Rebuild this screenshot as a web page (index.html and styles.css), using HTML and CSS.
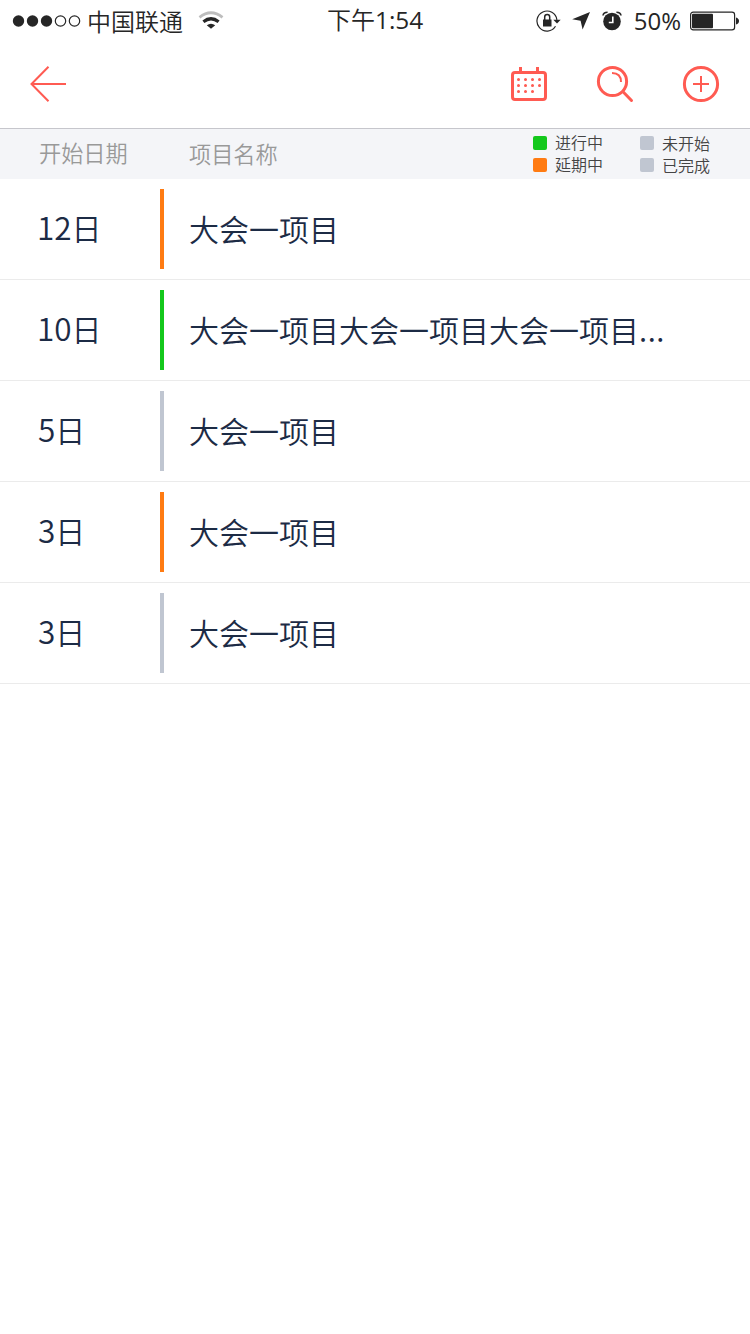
FILE: index.html
```html
<!DOCTYPE html>
<html lang="zh-CN">
<head>
<meta charset="utf-8">
<title>项目列表</title>
<link rel="stylesheet" href="styles.css">
</head>
<body>
<div class="status-bar">
  <div class="status-left">
    <svg class="signal" width="70" height="14" viewBox="0 0 70 14">
      <circle cx="6.500" cy="7" r="5.700"/><circle cx="20.500" cy="7" r="5.700"/><circle cx="34.500" cy="7" r="5.700"/>
      <circle class="empty" cx="48.500" cy="7" r="5.200"/><circle class="empty" cx="62.500" cy="7" r="5.200"/>
    </svg>
    <span class="carrier">中国联通</span>
    <svg class="wifi" width="26" height="20" viewBox="0 0 26 20">
      <path class="arc faint" d="M1.500 6.300Q13-2.800 24.500 6.300"/>
      <path class="arc" d="M5.400 10.700Q13 4.800 20.600 10.700"/>
      <path d="M8.800 14.200Q13 11.200 17.200 14.200L13 17.800Z"/>
    </svg>
  </div>
  <div class="clock">下午<span class="latin">1:54</span></div>
  <div class="status-right">
    <svg class="lock" width="26" height="24" viewBox="0 0 26 24">
      <path class="thin" d="M20.900 10.800A10 10 0 1 0 19.500 17.300"/>
      <path d="M17.300 10.700h7.400L21 14.500Z"/>
      <rect x="7" y="10.500" width="8.500" height="7"/>
      <path class="shackle" d="M8.700 11V8a2.500 2.500 0 0 1 5 0v3"/>
    </svg>
    <svg class="location" width="18" height="18" viewBox="0 0 18 18"><path d="M18 0L.2 7.200L8.600 8.800L10.600 17.500Z"/></svg>
    <svg class="alarm" width="20" height="20" viewBox="0 0 20 20">
      <circle cx="10" cy="10.500" r="8.800"/>
      <path class="bell" d="M1 4.500Q1.400 1.200 5.600 1.200M14.400 1.200Q18.600 1.200 19 4.500"/>
      <path class="hands" d="M10.800 5.500v6H6.800"/>
    </svg>
    <span class="percent latin">50%</span>
    <svg class="battery" width="50" height="20" viewBox="0 0 50 20">
      <rect class="shell" x=".6" y="1.100" width="44" height="17.800" rx="2.600"/>
      <rect x="2" y="2.800" width="21" height="14.500" rx="1"/>
      <path d="M46 6.500Q49 7.500 49 10T46 13.500Z"/>
    </svg>
  </div>
</div>

<div class="nav-bar">
  <svg class="back" width="38" height="38" viewBox="0 0 38 38"><path d="M37 19H3M19.500 1.800L2.500 19L19.500 36.200"/></svg>
  <div class="actions">
    <svg width="38" height="38" viewBox="0 0 38 38">
      <rect class="line" x="2.500" y="7.500" width="33" height="27" rx="2.500"/>
      <path class="line" d="M10.500 2v5M27.500 2v5"/>
      <path class="dots" d="M8.500 14.500h.01M15.500 14.500h.01M22.500 14.500h.01M29.500 14.500h.01M8.500 20.500h.01M15.500 20.500h.01M22.500 20.500h.01M29.500 20.500h.01M8.500 26.500h.01M15.500 26.500h.01M22.500 26.500h.01"/>
    </svg>
    <svg width="38" height="38" viewBox="0 0 38 38">
      <circle class="line" cx="16.500" cy="16.500" r="14.100"/>
      <path class="shine" d="M16 8Q25 8 25 17"/>
      <path class="line round" d="M27 26.800L35.500 35.500"/>
    </svg>
    <svg width="38" height="38" viewBox="0 0 38 38">
      <circle class="line" cx="19" cy="19" r="16.600"/>
      <path class="plus" d="M19 11v16M11 19h16"/>
    </svg>
  </div>
</div>

<div class="table-head">
  <div class="head-date">开始日期</div>
  <div class="head-name">项目名称</div>
  <div class="legend">
    <div class="legend-col">
      <div class="legend-item"><i class="swatch active"></i><span class="label">进行中</span></div>
      <div class="legend-item"><i class="swatch delayed"></i><span class="label">延期中</span></div>
    </div>
    <div class="legend-col">
      <div class="legend-item"><i class="swatch idle"></i><span class="label low">未开始</span></div>
      <div class="legend-item"><i class="swatch idle"></i><span class="label low">已完成</span></div>
    </div>
  </div>
</div>

<div class="list">
  <div class="row"><div class="date"><span class="digits">12</span><span class="day">日</span></div><div class="bar delayed"></div><div class="name">大会一项目</div></div>
  <div class="row"><div class="date"><span class="digits">10</span><span class="day">日</span></div><div class="bar active"></div><div class="name">大会一项目大会一项目大会一项目<span class="more">...</span></div></div>
  <div class="row"><div class="date short"><span class="digits">5</span><span class="day">日</span></div><div class="bar idle"></div><div class="name">大会一项目</div></div>
  <div class="row"><div class="date short"><span class="digits">3</span><span class="day">日</span></div><div class="bar delayed"></div><div class="name">大会一项目</div></div>
  <div class="row"><div class="date short"><span class="digits">3</span><span class="day">日</span></div><div class="bar idle"></div><div class="name">大会一项目</div></div>
</div>
</body>
</html>
```
FILE: styles.css
```css
* { box-sizing: border-box; }
body {
  margin: 0;
  width: 750px;
  min-height: 1334px;
  background: #fff;
  color: #1c2b45;
  font-family: "Noto Sans CJK SC", sans-serif;
  font-weight: 350;
}
svg { display: block; flex: none; }
.latin { font-family: "Open Sans", "Noto Sans", sans-serif; font-weight: 370; }

.status-bar {
  display: grid;
  grid-template-columns: 1fr 96px 1fr;
  height: 40px;
  color: #262626;
  fill: #262626;
  font-size: 24px;
  line-height: 40px;
  white-space: nowrap;
}
.status-left, .status-right { display: flex; align-items: center; height: 41px; }
.status-left { padding-left: 12px; }
.carrier { height: 40px; margin-left: 5px; line-height: 39px; }
.wifi { margin-left: 15px; }
.clock { line-height: 37px; }
.clock .latin { font-size: 24.400px; }
.empty { fill: none; stroke: #262626; stroke-width: 1.2; }
.arc { fill: none; stroke: #262626; stroke-width: 3.2; }
.faint { stroke: #bdbdbd; stroke-width: 2.8; }
.status-right { justify-content: flex-end; padding-right: 10px; }
.thin { fill: none; stroke: #262626; stroke-width: 1.2; }
.shackle { fill: none; stroke: #262626; stroke-width: 1.5; }
.location { margin-left: 10px; }
.alarm { margin-left: 12px; }
.bell { fill: none; stroke: #262626; stroke-width: 1.6; }
.hands { fill: none; stroke: #fff; stroke-width: 1.6; }
.percent { margin: 0 9px 0 12px; }
.shell { fill: none; stroke: #262626; stroke-width: 1.2; }

.nav-bar {
  display: flex;
  justify-content: space-between;
  height: 88px;
  padding: 25px 30px 0 29px;
  fill: none;
  stroke: #ff5b52;
}
.back { stroke-width: 2; }
.actions { display: flex; gap: 48px; }
.line { stroke-width: 3; }
.round { stroke-linecap: round; }
.dots { stroke-width: 3; stroke-linecap: round; }
.shine, .plus { stroke-width: 2; }

.table-head {
  display: flex;
  height: 51px;
  border-top: 1px solid #c6c6cc;
  background: #f4f5f8;
  color: #999;
  font-size: 22.200px;
  line-height: 50px;
}
.head-date { width: 189px; padding-left: 39px; line-height: 47px; }
.head-name { width: 343px; line-height: 49px; }
.legend { display: flex; gap: 36px; color: #444; font-size: 16px; }
.legend-col { padding-top: 3px; }
.legend-item { display: flex; align-items: center; height: 22px; }
.label { height: 22px; line-height: 20px; }
.low { line-height: 22px; }
.swatch { width: 14px; height: 14px; margin: 0 8px 0 1px; border-radius: 2px; }
.active { background: #14c81c; }
.delayed { background: #ff7b12; }
.idle { background: #c0c6d1; }

.row {
  display: flex;
  height: 101px;
  padding: 10px 0;
  border-bottom: 1px solid #ebebeb;
  font-size: 30px;
}
.date { display: flex; width: 160px; padding-left: 37px; line-height: 75px; }
.short { padding-left: 38px; }
.digits { font-size: 31.500px; }
.day { line-height: 76px; }
.bar { width: 4px; height: 80px; }
.name { padding-left: 25px; line-height: 79px; }
.more { letter-spacing: .6px; }
```
